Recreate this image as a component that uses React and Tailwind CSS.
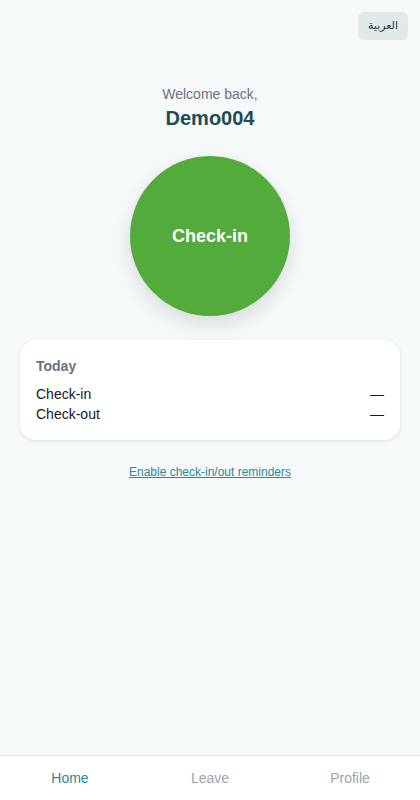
import { useState } from "react"

const tabs = ["Home", "Leave", "Profile"]

const App = () => {
  const [tab, setTab] = useState("Home")

  return (
    <div className="min-h-screen bg-[#f5f9fa] font-['Liberation_Sans',Arial,sans-serif] text-[#111827]">
      {/* Language switch */}
      <div className="flex justify-end px-3 pt-3">
        <button className="h-7 w-[50px] rounded-md bg-[#e1eaea] text-[11px] text-[#1f3b3d] font-['DejaVu_Sans',sans-serif]">
          العربية
        </button>
      </div>

      <div className="flex flex-col items-center mt-11">
        <p className="text-sm leading-5 text-[#6b7280]">Welcome back,</p>
        <h1 className="text-xl leading-7 font-bold text-[#1b4d52]">Demo004</h1>

        <button className="mt-6 w-40 h-40 rounded-full bg-[#52ab3a] text-white text-lg font-bold shadow-[0_8px_20px_rgba(0,0,0,0.12)]">
          Check-in
        </button>
      </div>

      {/* Today card */}
      <div className="mx-5 mt-6 rounded-2xl bg-white p-4 shadow-[0_1px_4px_rgba(0,0,0,0.1)]">
        <h2 className="text-sm leading-5 font-bold text-[#6b7280]">Today</h2>
        <div className="mt-2 text-sm leading-5">
          <div className="flex justify-between">
            <span>Check-in</span>
            <span>—</span>
          </div>
          <div className="flex justify-between">
            <span>Check-out</span>
            <span>—</span>
          </div>
        </div>
      </div>

      <div className="mt-6 flex justify-center">
        <button className="text-xs leading-4 text-[#2a8a96] underline">
          Enable check-in/out reminders
        </button>
      </div>

      {/* Bottom nav */}
      <nav className="fixed bottom-0 left-0 right-0 h-[45px] bg-white border-t border-[#e3e8ea] flex">
        {tabs.map((t) => (
          <button
            key={t}
            onClick={() => setTab(t)}
            className={`flex-1 text-sm ${t === tab ? "text-[#2a8a96]" : "text-[#9ca3af]"}`}
          >
            {t}
          </button>
        ))}
      </nav>
    </div>
  )
}

export default App
